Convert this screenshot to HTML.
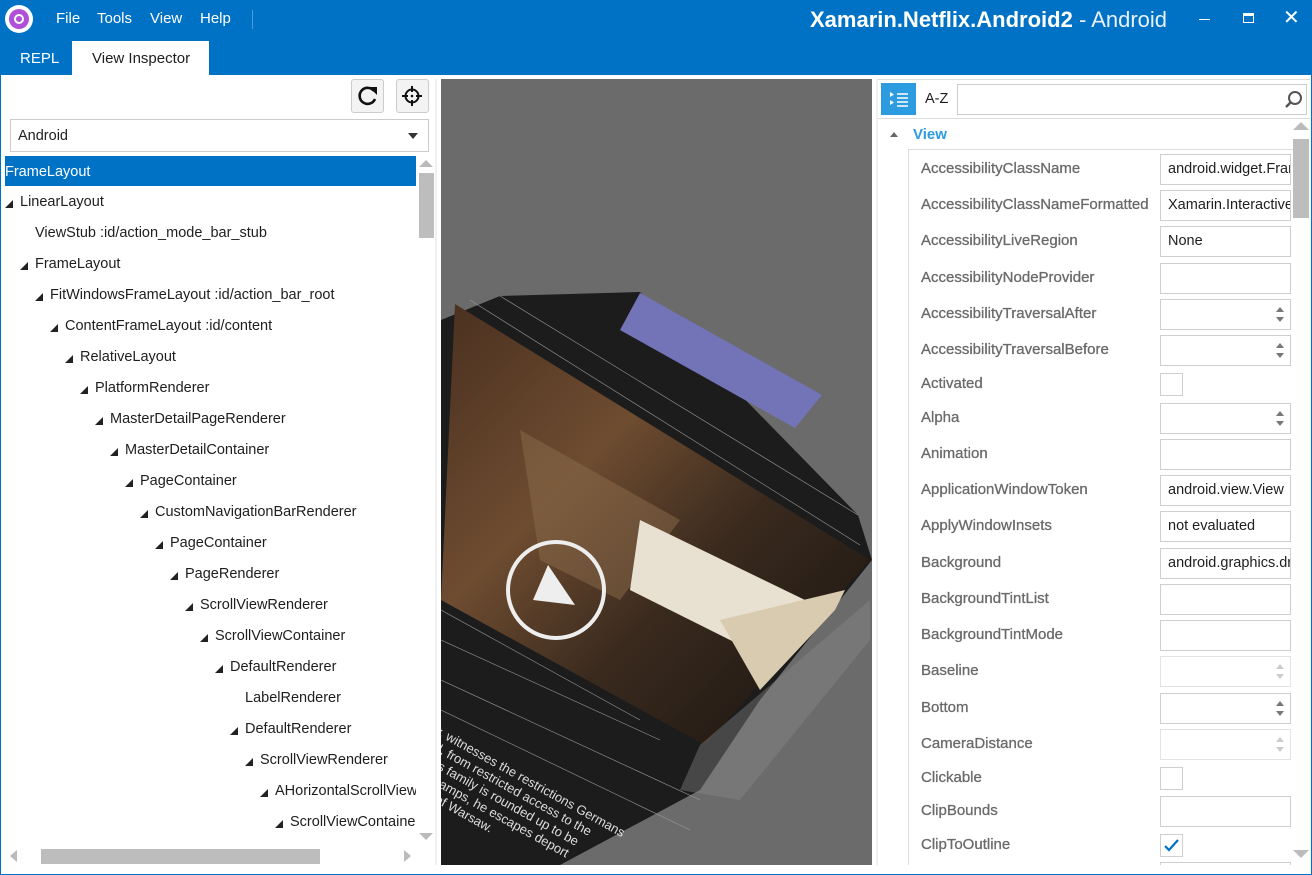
<!DOCTYPE html>
<html><head><meta charset="utf-8"><style>
*{margin:0;padding:0;box-sizing:border-box}
body{width:1312px;height:875px;overflow:hidden;background:#0072c6;font-family:"Liberation Sans",sans-serif;position:relative}
.a{position:absolute}
.menu{color:#fff;font-size:15px;top:10px}
.t{position:absolute;font-size:14.5px;color:#1e1e1e;white-space:nowrap}
.tri{position:absolute;width:0;height:0;border-left:8px solid transparent;border-bottom:8px solid #222}
.lbl{position:absolute;left:921px;font-size:15px;color:#6a6a6a;white-space:nowrap;-webkit-text-stroke:0.3px #6a6a6a}
.box{position:absolute;left:1160px;width:131px;height:31px;border:1px solid #cfcfcf;background:#fff;font-size:14.5px;color:#1e1e1e;padding:6px 7px;white-space:nowrap;overflow:hidden}
.cb{position:absolute;left:1160px;width:23px;height:23px;border:1px solid #cfcfcf;background:#fff}
.up,.dn{position:absolute;right:6px;width:0;height:0;border-left:4px solid transparent;border-right:4px solid transparent}
.up{top:7px;border-bottom:5px solid #777}.dn{bottom:7px;border-top:5px solid #777}
.dis .up{border-bottom-color:#ccc}.dis .dn{border-top-color:#ccc}
</style></head><body>
<div class="a" style="left:5px;top:5px;width:28px;height:28px;border-radius:50%;background:#fff"></div>
<div class="a" style="left:9px;top:9px;width:20px;height:20px;border-radius:50%;background:#b04fd8"></div>
<div class="a" style="left:14px;top:14px;width:10px;height:10px;border-radius:50%;border:2px solid #fff"></div>
<div class="a menu" style="left:56px">File</div>
<div class="a menu" style="left:97px">Tools</div>
<div class="a menu" style="left:150px">View</div>
<div class="a menu" style="left:200px">Help</div>
<div class="a" style="left:252px;top:10px;width:1px;height:19px;background:#4d9ad8"></div>
<div class="a" style="left:810px;top:7px;color:#fff;font-size:22px;white-space:nowrap"><b>Xamarin.Netflix.Android2</b> <span style="color:#e8f0fa"> - Android</span></div>
<div class="a" style="left:1199px;top:19px;width:11px;height:1px;background:#fff"></div>
<div class="a" style="left:1243px;top:13px;width:11px;height:10px;border:1px solid #fff;border-top:3px solid #fff"></div>
<div class="a" style="left:1283px;top:5px;color:#fff;font-size:20px">✕</div>
<div class="a" style="left:20px;top:50px;color:#fff;font-size:15px">REPL</div>
<div class="a" style="left:72px;top:41px;width:137px;height:34px;background:#fff"></div>
<div class="a" style="left:92px;top:50px;color:#1e1e1e;font-size:15px">View Inspector</div>
<div class="a" style="left:1px;top:75px;width:1310px;height:799px;background:#fff;overflow:hidden" id="main">
</div>
<div class="a" style="left:351px;top:79px;width:33px;height:34px;border:1px solid #ccc;border-radius:3px;background:#f3f3f3"></div>
<svg class="a" style="left:356px;top:85px" width="24" height="22" viewBox="0 0 24 22"><path d="M18 6 A8 8 0 1 0 19 14" fill="none" stroke="#111" stroke-width="2.6"/><path d="M13 2 L21 2 L21 10 Z" fill="#111"/></svg>
<div class="a" style="left:396px;top:79px;width:33px;height:34px;border:1px solid #ccc;border-radius:3px;background:#f3f3f3"></div>
<svg class="a" style="left:401px;top:85px" width="22" height="22" viewBox="0 0 22 22"><circle cx="11" cy="11" r="6.5" fill="none" stroke="#111" stroke-width="2"/><path d="M11 1v6M11 15v6M1 11h6M15 11h6" stroke="#111" stroke-width="2"/><circle cx="11" cy="11" r="1.3" fill="#111"/></svg>
<div class="a" style="left:10px;top:119px;width:419px;height:33px;border:1px solid #ccc;background:#fff"></div>
<div class="t" style="left:18px;top:128px">Android</div>
<div class="a" style="left:408px;top:133px;border-left:5px solid transparent;border-right:5px solid transparent;border-top:6px solid #333"></div>
<div class="a" style="left:5px;top:156px;width:411px;height:30px;background:#0072c6"></div>
<div class="t" style="left:5px;top:164px;color:#fff">FrameLayout</div>
<div class="a" style="left:418px;top:155px;width:17px;height:690px;background:#fff"></div>
<div class="a" style="left:419px;top:160px;border-left:7px solid transparent;border-right:7px solid transparent;border-bottom:7px solid #bbb"></div>
<div class="a" style="left:419px;top:173px;width:15px;height:65px;background:#bdbdbd"></div>
<div class="a" style="left:419px;top:833px;border-left:7px solid transparent;border-right:7px solid transparent;border-top:7px solid #bbb"></div>
<div class="a" style="left:10px;top:850px;border-top:6px solid transparent;border-bottom:6px solid transparent;border-right:7px solid #bbb"></div>
<div class="a" style="left:41px;top:849px;width:279px;height:15px;background:#bdbdbd"></div>
<div class="a" style="left:404px;top:850px;border-top:6px solid transparent;border-bottom:6px solid transparent;border-left:7px solid #bbb"></div>
<div class="a" style="left:435px;top:79px;width:2px;height:786px;background:#f0f0f0"></div>
<div id="tree"></div>
<div class="a" style="left:441px;top:79px;width:431px;height:786px;background:#6b6b6b;overflow:hidden">
<svg width="431" height="786" viewBox="441 79 431 786">
<defs><linearGradient id="ph" x1="0" y1="0" x2="1" y2="1"><stop offset="0" stop-color="#4a3020"/><stop offset=".35" stop-color="#6e4c30"/><stop offset=".6" stop-color="#3a2a1e"/><stop offset="1" stop-color="#15120f"/></linearGradient></defs>
<polygon points="441,320 500,296 640,292 858,515 872,560 760,700 700,790 560,865 441,865" fill="#1c1c1c"/>
<polygon points="640,293 822,395 795,428 620,330" fill="#7373b8"/>
<polygon points="455,304 870,560 705,745 441,600" fill="url(#ph)"/>
<polygon points="520,430 680,520 620,600 540,560" fill="#8c6c4c" opacity=".5"/>
<polygon points="640,520 805,600 800,620 770,660 630,590" fill="#e8e0d0"/>
<polygon points="720,620 845,590 835,610 760,690" fill="#d8cbb0"/>
<polygon points="700,745 870,600 870,640 740,800 680,790" fill="#8a8a8a" opacity=".4"/>
<circle cx="556" cy="590" r="48" fill="none" stroke="#eee" stroke-width="4"/>
<polygon points="533,600 548,565 575,605" fill="#eee"/>
<g stroke="#999" stroke-width=".6" fill="none"><path d="M441,610 L640,720 M441,640 L660,740 M441,680 L700,800 M441,710 L690,830 M500,296 L858,515 M470,300 L860,545"/></g>
<g fill="#ddd" font-size="13" font-family="Liberation Sans,sans-serif" transform="rotate(29 441 720)"><text x="441" y="735">y, witnesses the restrictions Germans</text><text x="432" y="750">pital, from restricted access to the</text><text x="432" y="765">As his family is rounded up to be</text><text x="432" y="780">labor camps, he escapes deport</text><text x="432" y="795">e ruins of Warsaw.</text></g>
</svg></div>
<div class="a" style="left:876px;top:79px;width:2px;height:786px;background:#f0f0f0"></div>
<div class="a" style="left:878px;top:79px;width:432px;height:1px;background:#ddd"></div>
<div class="a" style="left:881px;top:83px;width:35px;height:32px;background:#2d9be0"></div>
<svg class="a" style="left:889px;top:91px" width="20" height="16"><path d="M1 1l4 2.5-4 2.5zM1 9l4 2.5-4 2.5z" fill="#fff"/><path d="M8 3h11M8 7h11M8 11h11M8 15h11" stroke="#fff" stroke-width="1.5"/></svg>
<div class="a" style="left:925px;top:91px;font-size:14.5px;color:#1e1e1e">A-Z</div>
<div class="a" style="left:957px;top:84px;width:350px;height:31px;border:1px solid #ccc"></div>
<svg class="a" style="left:1284px;top:90px" width="20" height="20"><circle cx="11" cy="8" r="6" fill="none" stroke="#555" stroke-width="2"/><path d="M7 12l-5 5" stroke="#555" stroke-width="2.5"/></svg>
<div class="a" style="left:878px;top:118px;width:432px;height:1px;background:#ddd"></div>
<div class="a" style="left:890px;top:132px;border-left:4px solid transparent;border-right:4px solid transparent;border-bottom:5px solid #666"></div>
<div class="a" style="left:913px;top:126px;font-size:15px;font-weight:bold;color:#2d9be0">View</div>
<div class="a" style="left:908px;top:149px;width:385px;height:1px;background:#ddd"></div>
<div class="a" style="left:908px;top:149px;width:1px;height:716px;background:#ddd"></div>
<div class="a" style="left:1293px;top:122px;border-left:8px solid transparent;border-right:8px solid transparent;border-bottom:8px solid #bbb"></div>
<div class="a" style="left:1293px;top:139px;width:16px;height:79px;background:#bdbdbd"></div>
<div class="a" style="left:1293px;top:850px;border-left:8px solid transparent;border-right:8px solid transparent;border-top:8px solid #bbb"></div>
<div id="props"></div>
<script>
var tr=[["FrameLayout",0,0],["LinearLayout",20,1],["ViewStub :id/action_mode_bar_stub",35,0],["FrameLayout",35,1],["FitWindowsFrameLayout :id/action_bar_root",50,1],["ContentFrameLayout :id/content",65,1],["RelativeLayout",80,1],["PlatformRenderer",95,1],["MasterDetailPageRenderer",110,1],["MasterDetailContainer",125,1],["PageContainer",140,1],["CustomNavigationBarRenderer",155,1],["PageContainer",170,1],["PageRenderer",185,1],["ScrollViewRenderer",200,1],["ScrollViewContainer",215,1],["DefaultRenderer",230,1],["LabelRenderer",245,0],["DefaultRenderer",245,1],["ScrollViewRenderer",260,1],["AHorizontalScrollView",275,1],["ScrollViewContainer",290,1]];
var h="";for(var i=1;i<tr.length;i++){var y=172+31*i;var txt=tr[i][0];var x=tr[i][1];var w=416-x;h+='<div class="t" style="left:'+x+'px;top:'+(y-9)+'px;width:'+w+'px;overflow:hidden">'+txt+'</div>';if(tr[i][2])h+='<div class="tri" style="left:'+(x-15)+'px;top:'+(y-3)+'px"></div>';}
document.getElementById("tree").innerHTML=h;
var P=[["AccessibilityClassName",169,"t","android.widget.FrameLayout"],["AccessibilityClassNameFormatted",205,"t","Xamarin.Interactive"],["AccessibilityLiveRegion",241,"t","None"],["AccessibilityNodeProvider",278,"t",""],["AccessibilityTraversalAfter",314,"s"],["AccessibilityTraversalBefore",350,"s"],["Activated",384,"c"],["Alpha",418,"s"],["Animation",454,"t",""],["ApplicationWindowToken",490,"t","android.view.View"],["ApplyWindowInsets",526,"t","not evaluated"],["Background",563,"t","android.graphics.drawable"],["BackgroundTintList",599,"t",""],["BackgroundTintMode",635,"t",""],["Baseline",671,"d"],["Bottom",708,"s"],["CameraDistance",744,"d"],["Clickable",778,"c"],["ClipBounds",811,"t",""],["ClipToOutline",845,"k"]];
h="";P.forEach(function(p){var y=p[1];h+='<div class="lbl" style="top:'+(y-9)+'px">'+p[0]+'</div>';
if(p[2]=="t")h+='<div class="box" style="top:'+(y-15)+'px">'+p[3]+'</div>';
else if(p[2]=="s")h+='<div class="box" style="top:'+(y-15)+'px"><div class="up"></div><div class="dn"></div></div>';
else if(p[2]=="d")h+='<div class="box dis" style="top:'+(y-15)+'px;border-color:#e3e3e3"><div class="up"></div><div class="dn"></div></div>';
else if(p[2]=="c")h+='<div class="cb" style="top:'+(y-11)+'px"></div>';
else h+='<div class="cb" style="top:'+(y-11)+'px"><svg width="21" height="21"><path d="M4 11l4 4 9-10" fill="none" stroke="#0072c6" stroke-width="2.2"/></svg></div>';});
h+='<div class="box" style="top:862px;height:3px;border-bottom:none;padding:0"></div>';
document.getElementById("props").innerHTML=h;
</script>
</body></html>
